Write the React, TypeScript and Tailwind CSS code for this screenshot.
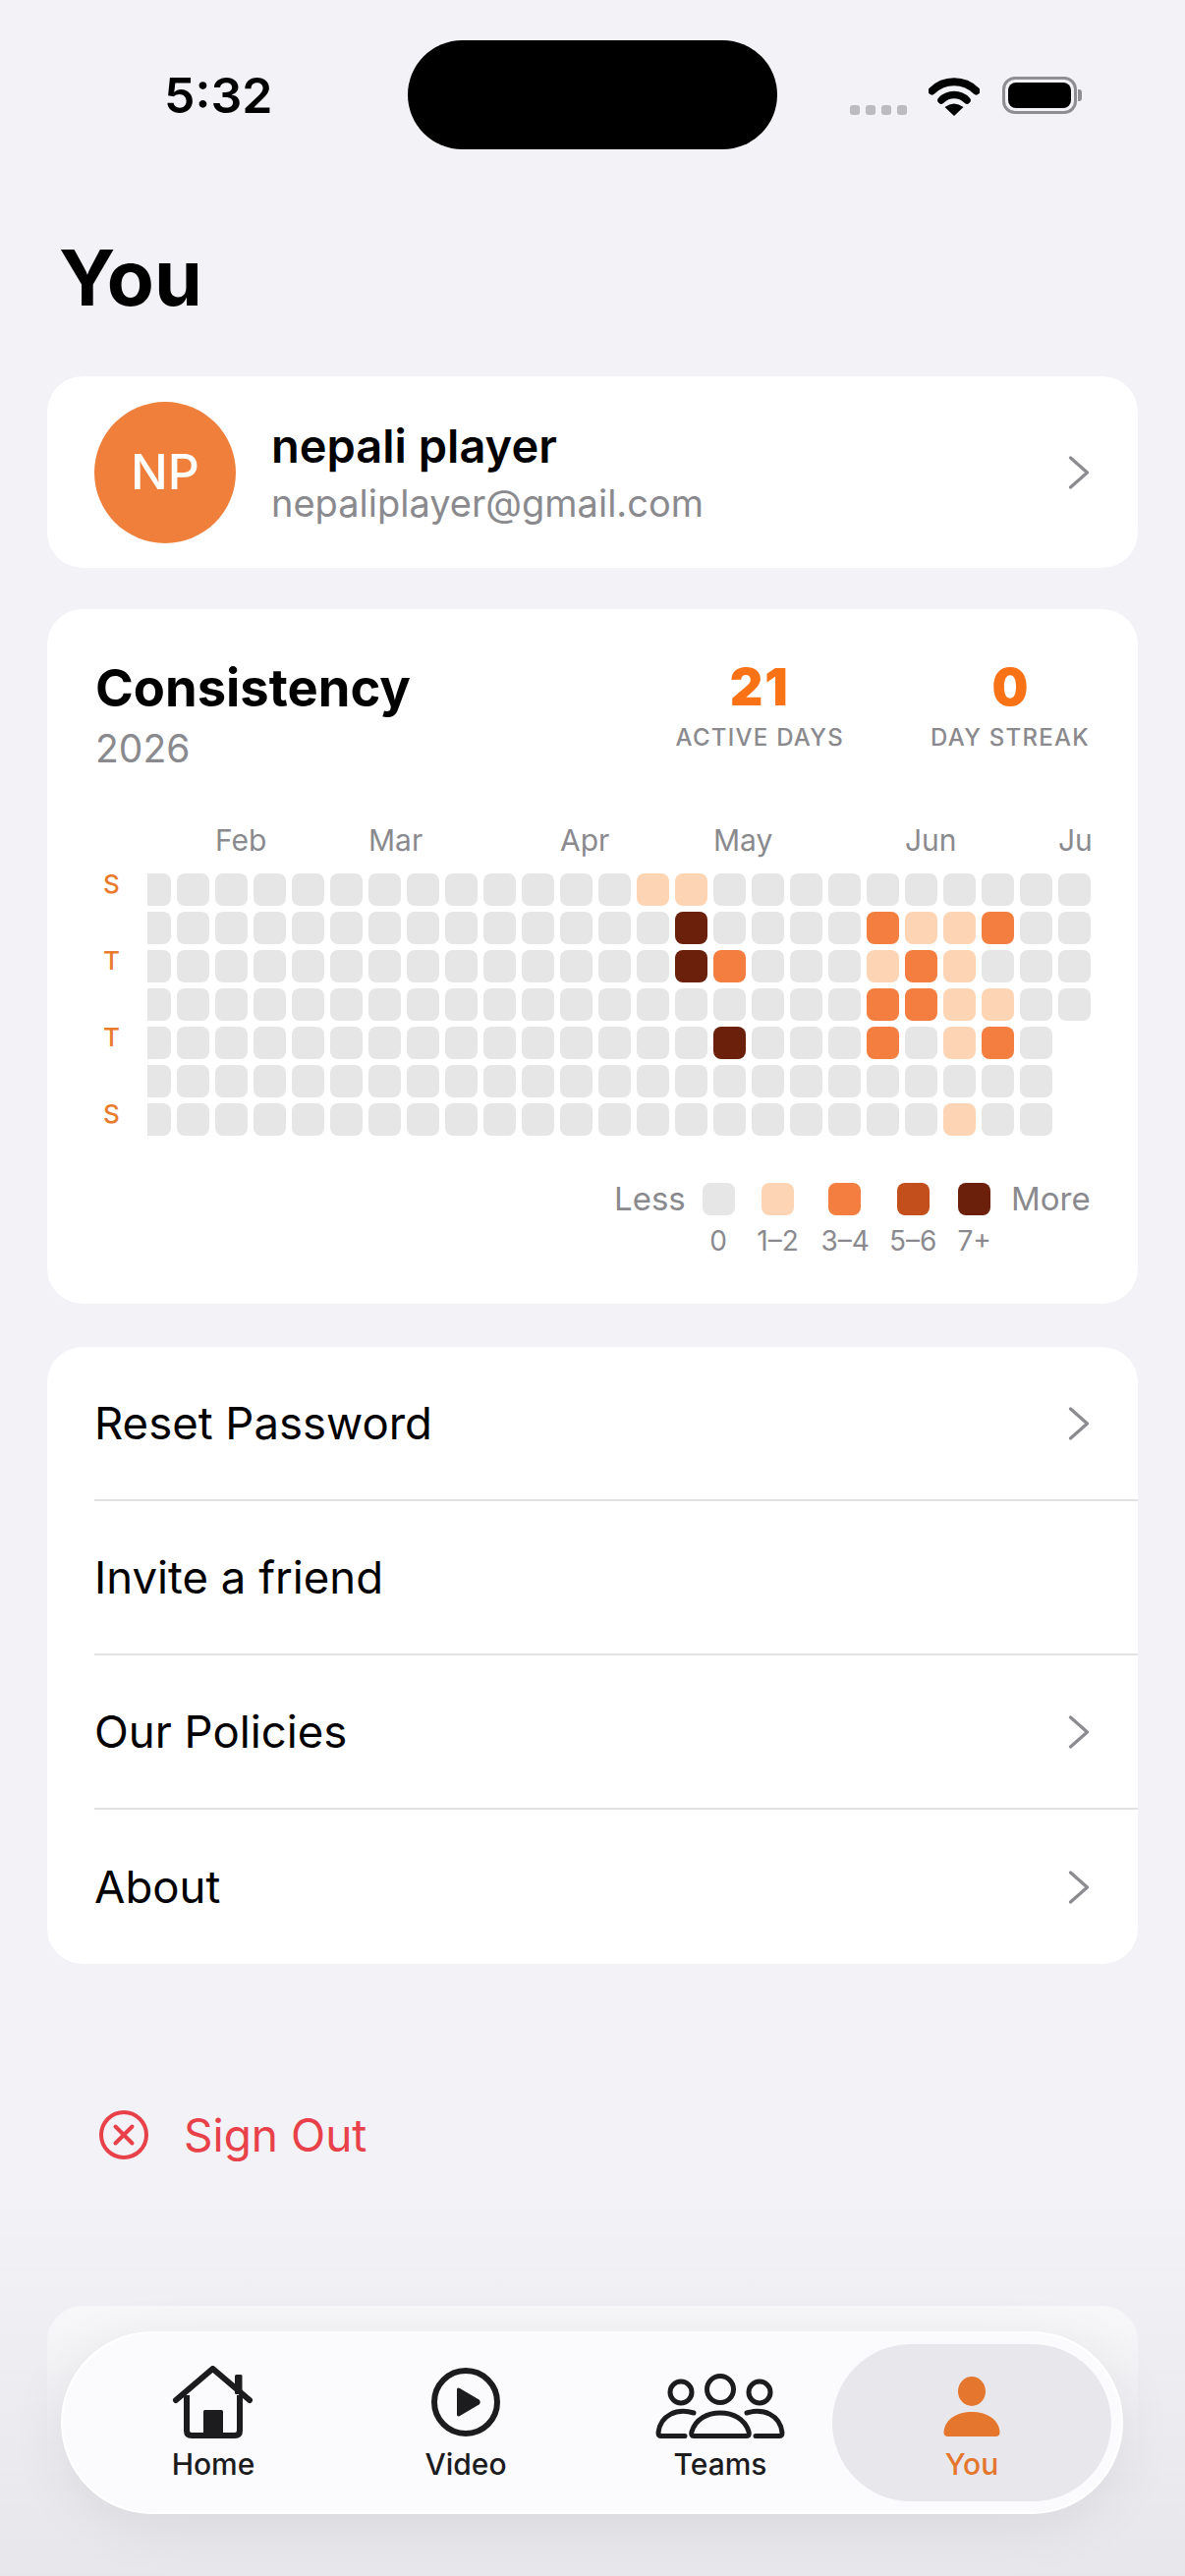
import React from "react";

const active: Record<string, number> = {
  "0-12": 1, "0-13": 1, "1-13": 4, "2-13": 4, "2-14": 2, "4-14": 4,
  "1-18": 2, "1-19": 1, "1-20": 1, "1-21": 2,
  "2-18": 1, "2-19": 2, "2-20": 1,
  "3-18": 2, "3-19": 2, "3-20": 1, "3-21": 1,
  "4-18": 2, "4-20": 1, "4-21": 2, "6-20": 1,
};
const levelClass = ["bg-[#e6e6e7]", "bg-[#fdd5b4]", "bg-[#f47e40]", "bg-[#c24f1c]", "bg-[#6a200b]"];
const rows = [0, 1, 2, 3, 4, 5, 6];
const cols = Array.from({ length: 25 }, (_, i) => i - 1);

function Chevron() {
  return (
    <svg width="22" height="34" viewBox="0 0 22 34" fill="none" className="shrink-0">
      <path d="M2.5 2 L19.5 17 L2.5 32" stroke="#8b8b90" strokeWidth="3.2" strokeLinecap="round" strokeLinejoin="round" />
    </svg>
  );
}

function Row({ label, chevron = true, border = true }: { label: string; chevron?: boolean; border?: boolean }) {
  return (
    <div className={`h-[157px] ml-[48px] flex items-center justify-between pr-[49px] ${border ? "border-b-2 border-[#e2e2e5]" : ""}`}>
      <span className="text-[45.5px] leading-none text-black">{label}</span>
      {chevron && <Chevron />}
    </div>
  );
}

function HomeIcon() {
  return (
    <svg width="84" height="74" viewBox="0 0 84 74" fill="none">
      <path d="M4 35 L41.5 3 L79 35" stroke="#1c1c1e" strokeWidth="6" strokeLinecap="round" strokeLinejoin="round" />
      <rect x="64" y="9" width="7.5" height="20" rx="1.5" fill="#1c1c1e" />
      <path d="M15 30 V66 Q15 71 20 71 H64 Q69 71 69 66 V30" stroke="#1c1c1e" strokeWidth="6" />
      <rect x="32" y="45" width="20" height="27" rx="1.5" fill="#1c1c1e" />
    </svg>
  );
}

function VideoIcon() {
  return (
    <svg width="74" height="74" viewBox="0 0 74 74" fill="none">
      <circle cx="37" cy="37" r="32" stroke="#1c1c1e" strokeWidth="6" />
      <path d="M28 24.5 Q28 21.5 31 23 L50.5 34.5 Q53 37 50.5 39.5 L31 51 Q28 52.5 28 49.5 Z" fill="#1c1c1e" />
    </svg>
  );
}

function TeamsIcon() {
  return (
    <svg width="132" height="66" viewBox="0 0 132 66" fill="none" stroke="#1c1c1e" strokeWidth="5">
      <circle cx="26" cy="19" r="11" />
      <circle cx="66" cy="16" r="13.5" />
      <circle cx="106" cy="19" r="11" />
      <path d="M39 40 C22 35 5 42 3 60 Q3 63.5 6 63.5 H30" strokeLinecap="round" />
      <path d="M93 40 C110 35 127 42 129 60 Q129 63.5 126 63.5 H102" strokeLinecap="round" />
      <path d="M39 63.5 Q36 63.5 37 59 C41 46 53 40 66 40 C79 40 91 46 95 59 Q96 63.5 93 63.5 Z" strokeLinejoin="round" />
    </svg>
  );
}

function YouIcon() {
  return (
    <svg width="60" height="66" viewBox="0 0 60 66" fill="#e5762e">
      <ellipse cx="30" cy="18" rx="14" ry="15" />
      <path d="M1.5 59 C3 46 15 39 30 39 C45 39 57 46 58.5 59 Q59 64 54 64 H6 Q1 64 1.5 59 Z" />
    </svg>
  );
}

function Tab({ label, icon, selected = false, className = "" }: { label: string; icon: React.ReactNode; selected?: boolean; className?: string }) {
  return (
    <div className={`flex flex-col items-center justify-end h-[160px] pb-[20px] ${selected ? "w-[284px] rounded-[80px] bg-[#e8e8ec]" : "w-[150px]"} ${className}`}>
      <div className="h-[74px] flex items-end">{icon}</div>
      <span className={`mt-[8px] text-[30px] leading-[36px] font-medium ${selected ? "text-[#e5762e]" : "text-[#1c1c1e]"}`}>{label}</span>
    </div>
  );
}

export default function App() {
  return (
    <div className="relative w-[1206px] h-[2622px] overflow-hidden bg-[#f2f2f7] [font-family:Inter,sans-serif]">
      {/* Status bar */}
      <div className="h-[152px] pt-[41px] pl-[167px] flex items-start">
        <span className="w-[248px] mt-[31px] text-[50px] leading-[50px] font-semibold text-black">5:32</span>
        <div className="w-[376px] h-[111px] rounded-[56px] bg-black" />
        <div className="ml-[74px] mt-[66px] flex gap-[6px]">
          {[0, 1, 2, 3].map((i) => (
            <div key={i} className="w-[10px] h-[10px] rounded-[3px] bg-[#bcbcc0]" />
          ))}
        </div>
        <svg width="52" height="40" viewBox="0 0 52 40" className="ml-[22px] mt-[37px]" fill="none">
          <path d="M3.5 14.5 A32 32 0 0 1 48.5 14.5" stroke="#000" strokeWidth="8" strokeLinecap="round" />
          <path d="M13 24 A18 18 0 0 1 39 24" stroke="#000" strokeWidth="7.5" strokeLinecap="round" />
          <path d="M26 40 L16.5 31 Q26 24 35.5 31 Z" fill="#000" />
        </svg>
        <div className="ml-[23px] mt-[37px] flex items-center">
          <div className="w-[76px] h-[38px] rounded-[13px] border-[3px] border-[#8e8e93] p-[3px]">
            <div className="w-full h-full rounded-[8px] bg-black" />
          </div>
          <div className="ml-[1px] w-[4px] h-[12px] rounded-r-[3px] bg-[#8e8e93]" />
        </div>
      </div>

      {/* Title */}
      <h1 className="mt-[85px] ml-[60px] h-[146px] text-[78.5px] leading-[92px] font-bold text-black">You</h1>

      <div className="mx-[48px] flex flex-col">
        {/* Profile */}
        <div className="h-[195px] rounded-[36px] bg-white flex items-center pl-[48px] pr-[49px]">
          <div className="w-[144px] h-[144px] rounded-full bg-[#ef7f3a] flex items-center justify-center text-white text-[50px] font-medium">NP</div>
          <div className="ml-[36px] flex-1 flex flex-col">
            <span className="text-[47px] leading-[56px] font-semibold text-black">nepali player</span>
            <span className="mt-[7px] text-[38px] leading-[46px] text-[#8a8a8e]">nepaliplayer@gmail.com</span>
          </div>
          <Chevron />
        </div>

        {/* Consistency */}
        <div className="mt-[42px] h-[707px] rounded-[36px] bg-white pl-[49px] pr-[48px] pt-[48px]">
          <div className="flex justify-between items-start">
            <div className="flex flex-col">
              <span className="text-[52.5px] leading-[64px] font-bold text-black">Consistency</span>
              <span className="mt-[7px] text-[39px] leading-[46px] text-[#8a8a8e]">2026</span>
            </div>
            <div className="flex gap-[88px] pt-[4px] pr-[1px]">
              <div className="flex flex-col items-center">
                <span className="text-[52px] leading-[56px] font-black tracking-[2px] text-[#f97316]">21</span>
                <span className="mt-[8px] text-[24px] leading-[30px] font-medium tracking-[1.25px] text-[#8a8a8e]">ACTIVE DAYS</span>
              </div>
              <div className="flex flex-col items-center">
                <span className="text-[52px] leading-[56px] font-black text-[#f97316]">0</span>
                <span className="mt-[8px] text-[24px] leading-[30px] font-medium tracking-[1.25px] text-[#8a8a8e]">DAY STREAK</span>
              </div>
            </div>
          </div>

          <div className="mt-[52px] flex">
            <div className="w-[53px] pt-[52px] flex flex-col gap-[6px]">
              {["S", "", "T", "", "T", "", "S"].map((d, i) => (
                <span key={i} className="h-[33px] pl-[8px] text-[26px] leading-[21px] font-medium text-[#e87b2d]">{d}</span>
              ))}
            </div>
            <div className="w-[960px] overflow-hidden">
              <div className="-ml-[9px] w-[969px]">
                <div className="h-[52px] grid grid-cols-[repeat(25,33px)] gap-x-[6px] text-[30px] leading-[36px] text-[#8a8a8e] whitespace-nowrap">
                  <span className="col-start-3">Feb</span>
                  <span className="col-start-7">Mar</span>
                  <span className="col-start-12">Apr</span>
                  <span className="col-start-16">May</span>
                  <span className="col-start-21">Jun</span>
                  <span className="col-start-25">Jul</span>
                </div>
                <div className="grid grid-cols-[repeat(25,33px)] auto-rows-[33px] gap-[6px]">
                  {rows.flatMap((r) =>
                    cols.map((c) => {
                      const empty = r >= 4 && c === 23;
                      const level = active[`${r}-${c}`] ?? 0;
                      return <div key={`${r}-${c}`} className={`rounded-[8px] ${empty ? "" : levelClass[level]}`} />;
                    })
                  )}
                </div>
              </div>
            </div>
          </div>

          <div className="mt-[48px] flex justify-end">
            <div className="grid grid-cols-[68px_33px_45px_48px_48px_33px_81px] gap-x-[21.5px] text-[#8a8a8e]">
              <span className="text-[33px] leading-[33px]">Less</span>
              {levelClass.map((l) => (
                <div key={l} className={`w-[33px] h-[33px] justify-self-center rounded-[8px] ${l}`} />
              ))}
              <span className="text-[33px] leading-[33px]">More</span>
              <span />
              {["0", "1–2", "3–4", "5–6", "7+"].map((t) => (
                <span key={t} className="mt-[10px] text-center text-[28px] leading-[32px] whitespace-nowrap">{t}</span>
              ))}
              <span />
            </div>
          </div>
        </div>

        {/* Menu */}
        <div className="mt-[44px] rounded-[36px] bg-white overflow-hidden">
          <Row label="Reset Password" />
          <Row label="Invite a friend" chevron={false} />
          <Row label="Our Policies" />
          <Row label="About" border={false} />
        </div>

        {/* Sign out */}
        <div className="mt-[149px] ml-[53px] flex items-center">
          <svg width="50" height="50" viewBox="0 0 50 50" fill="none" stroke="#e8414a" strokeWidth="4" strokeLinecap="round">
            <circle cx="25" cy="25" r="23" />
            <path d="M16.5 16.5 L33.5 33.5 M33.5 16.5 L16.5 33.5" />
          </svg>
          <span className="ml-[36px] text-[46px] leading-[50px] text-[#e8414a]">Sign Out</span>
        </div>

        {/* Next card, scrolled under the tab bar */}
        <div className="mt-[149px] h-[180px] rounded-t-[36px] bg-gradient-to-b from-[#fbfbfd] to-[#f2f2f700]" />
      </div>

      {/* Fade behind tab bar */}
      <div className="absolute left-0 right-0 bottom-0 h-[400px] bg-gradient-to-b from-[#00000000] to-[#0000000c]" />

      {/* Tab bar */}
      <div className="absolute left-[62px] top-[2373px] w-[1081px] h-[186px] rounded-[93px] bg-[#fbfbfe] border-[2px] border-white shadow-[0_12px_60px_rgba(0,0,0,0.07)] flex items-center pl-[78px]">
        <Tab label="Home" icon={<HomeIcon />} />
        <Tab label="Video" icon={<VideoIcon />} className="ml-[107px]" />
        <Tab label="Teams" icon={<TeamsIcon />} className="ml-[109px]" />
        <Tab label="You" icon={<YouIcon />} selected className="ml-[39px]" />
      </div>
    </div>
  );
}
